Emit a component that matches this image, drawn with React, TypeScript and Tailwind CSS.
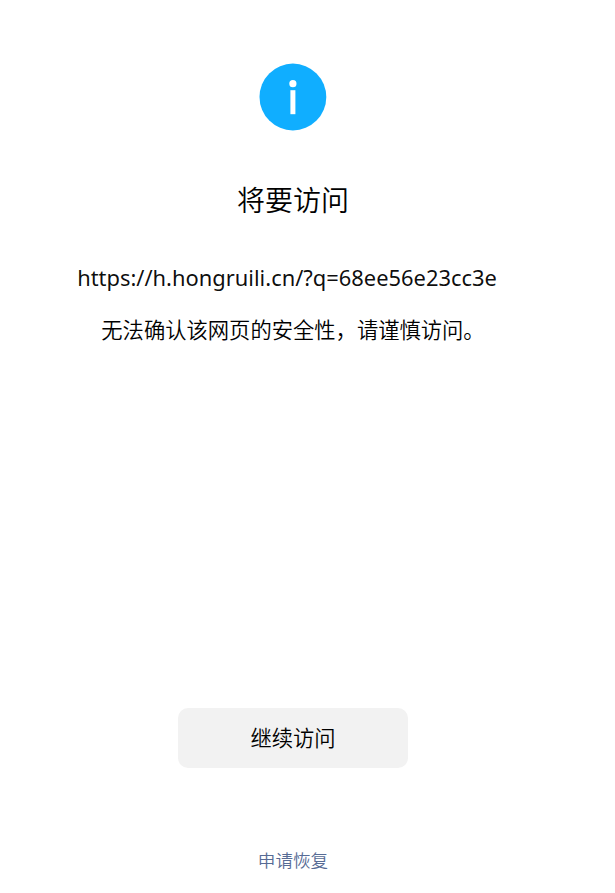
import React from 'react';

const TARGET_URL = 'https://h.hongruili.cn/?q=68ee56e23cc3e';

const InfoIcon: React.FC = () => (
  <svg className="w-[68px] h-[68px]" viewBox="0 0 68 68" fill="none">
    <circle cx="33.9" cy="34" r="33.4" fill="#10AEFF" />
    <circle cx="33.9" cy="20.7" r="3.6" fill="#fff" />
    <path d="M31.4 27.2h5v24h-5z" fill="#fff" />
  </svg>
);

export default function App() {
  return (
    <div className="w-[615px] h-[893px] bg-white overflow-hidden font-['Noto_Sans_CJK_SC',sans-serif]">
      <main className="w-[586px] h-full flex flex-col items-center pt-[63px] text-black">
        <InfoIcon />
        <h1 className="mt-[48px] h-10 leading-10 text-[28px] font-[350]">将要访问</h1>
        <p className="mt-[41px] h-9 leading-9 mr-[12px] text-[21.9px] whitespace-nowrap text-black/95 font-['Noto_Sans',sans-serif]">
          {TARGET_URL}
        </p>
        <p className="mt-[15px] h-9 leading-9 text-[21.3px] font-[350] whitespace-nowrap">
          无法确认该网页的安全性，请谨慎访问。
        </p>
        <button className="mt-[361px] shrink-0 w-[230px] h-[60px] pb-[2px] rounded-[10px] bg-[#f2f2f2] text-[21.3px] font-[350]">
          继续访问
        </button>
        <a className="mt-[78px] h-7 leading-7 text-[17.6px] font-[350] text-[#576b95]">申请恢复</a>
      </main>
    </div>
  );
}
